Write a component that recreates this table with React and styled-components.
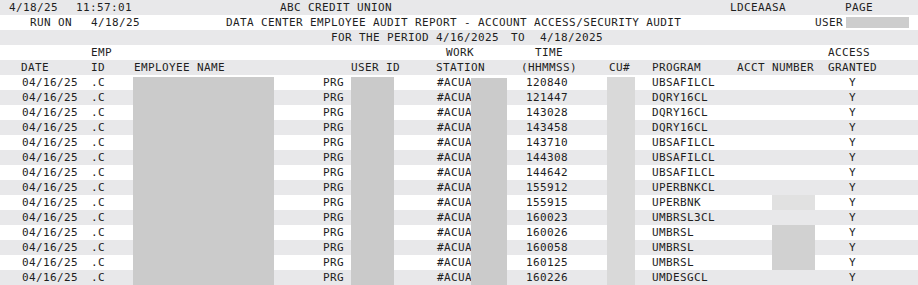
import React from "react"
import styled, { createGlobalStyle } from "styled-components"

const Global = createGlobalStyle`
  body {
    margin: 0;
    background: #fff;
  }
`

const Report = styled.div`
  width: 918px;
  font-family: "DejaVu Sans Mono", "Liberation Mono", monospace;
  font-size: 11px;
  letter-spacing: 0.38px;
  color: #1e1e1e;
`

// one printed line of the report, striped like greenbar paper
const Line = styled.div`
  display: grid;
  grid-template-columns: ${p => p.$cols};
  padding-left: ${p => p.$left}px;
  height: 15px;
  box-sizing: border-box;
  padding-top: 1px;
  line-height: 14px;
  background: ${p => (p.$shade ? "#e8e8ea" : "#fff")};
`

const Cell = styled.span`
  grid-column: ${p => p.$col || "auto"};
  padding-left: ${p => p.$pad || 0}px;
  white-space: pre;
  overflow: visible;
`

// blurred-out field
const Redact = styled.span`
  grid-column: ${p => p.$col || "auto"};
  margin-top: ${p => (p.$top || 0) - 1}px;
  margin-bottom: ${p => p.$bottom || 0}px;
  background: ${p => p.$color || "#cbcbcb"};
`

const AcctBox = styled.span`
  grid-column: 15;
  margin-left: 36px;
  width: 43px;
  margin-top: -1px;
  background: ${p => p.$color};
`

const TABLE = "70px 42px 141px 48px 29px 43px 42px 35px 36px 12px 88px 28px 16px 85px 92px 1fr"

const rows = [
  { time: "120840", prog: "UBSAFILCL" },
  { time: "121447", prog: "DQRY16CL" },
  { time: "143028", prog: "DQRY16CL" },
  { time: "143458", prog: "DQRY16CL" },
  { time: "143710", prog: "UBSAFILCL" },
  { time: "144308", prog: "UBSAFILCL" },
  { time: "144642", prog: "UBSAFILCL" },
  { time: "155912", prog: "UPERBNKCL" },
  { time: "155915", prog: "UPERBNK", acct: "#e1e1e1" },
  { time: "160023", prog: "UMBRSL3CL" },
  { time: "160026", prog: "UMBRSL", acct: "#d1d1d1" },
  { time: "160058", prog: "UMBRSL", acct: "#d1d1d1" },
  { time: "160125", prog: "UMBRSL", acct: "#d1d1d1" },
  { time: "160226", prog: "UMDESGCL" },
]

export default function App() {
  return (
    <Report>
      <Global />
      <Line $shade $left={9} $cols="67px 204px 450px 115px 1fr">
        <Cell>4/18/25</Cell>
        <Cell>11:57:01</Cell>
        <Cell>ABC CREDIT UNION</Cell>
        <Cell>LDCEAASA</Cell>
        <Cell>PAGE</Cell>
      </Line>
      <Line $left={30} $cols="61px 135px 589px 31px 63px 1fr">
        <Cell>RUN ON</Cell>
        <Cell>4/18/25</Cell>
        <Cell>DATA CENTER EMPLOYEE AUDIT REPORT - ACCOUNT ACCESS/SECURITY AUDIT</Cell>
        <Cell>USER</Cell>
        <Redact $top={2} $bottom={2} $color="#cdcdcd" />
      </Line>
      <Line $shade $left={331} $cols="105px 75px 29px 1fr">
        <Cell>FOR THE PERIOD</Cell>
        <Cell>4/16/2025</Cell>
        <Cell>TO</Cell>
        <Cell>4/18/2025</Cell>
      </Line>
      <Line $left={21} $cols={TABLE}>
        <Cell $col={2}>EMP</Cell>
        <Cell $col={8} $pad={10}>WORK</Cell>
        <Cell $col={11} $pad={16}>TIME</Cell>
        <Cell $col={16}>ACCESS</Cell>
      </Line>
      <Line $shade $left={21} $cols={TABLE}>
        <Cell $col={1}>DATE</Cell>
        <Cell $col={2}>ID</Cell>
        <Cell $col={3} $pad={1}>EMPLOYEE NAME</Cell>
        <Cell $col={6}>USER ID</Cell>
        <Cell $col={8}>STATION</Cell>
        <Cell $col={11} $pad={2}>(HHMMSS)</Cell>
        <Cell $col={12} $pad={2}>CU#</Cell>
        <Cell $col={14} $pad={1}>PROGRAM</Cell>
        <Cell $col={15} $pad={1}>ACCT NUMBER</Cell>
        <Cell $col={16}>GRANTED</Cell>
      </Line>
      {rows.map((r, i) => (
        <Line key={r.time} $shade={i % 2 === 1} $left={21} $cols={TABLE}>
          <Cell $col={1} $pad={1}>04/16/25</Cell>
          <Cell $col={2}>.C</Cell>
          <Redact $col={3} $top={i === 0 ? 2 : 0} />
          <Cell $col={5} $pad={1}>PRG</Cell>
          <Redact $col={6} $top={i === 0 ? 2 : 0} $color="#cacaca" />
          <Cell $col={8} $pad={1}>#ACUA</Cell>
          <Redact $col={9} $top={i === 0 ? 3 : 0} />
          <Cell $col={11} $pad={7}>{r.time}</Cell>
          <Redact $col={12} $top={i === 0 ? 2 : 0} $color="#d9d9d9" />
          <Cell $col={14} $pad={1}>{r.prog}</Cell>
          {r.acct && <AcctBox $color={r.acct} />}
          <Cell $col={16} $pad={21}>Y</Cell>
        </Line>
      ))}
    </Report>
  )
}
